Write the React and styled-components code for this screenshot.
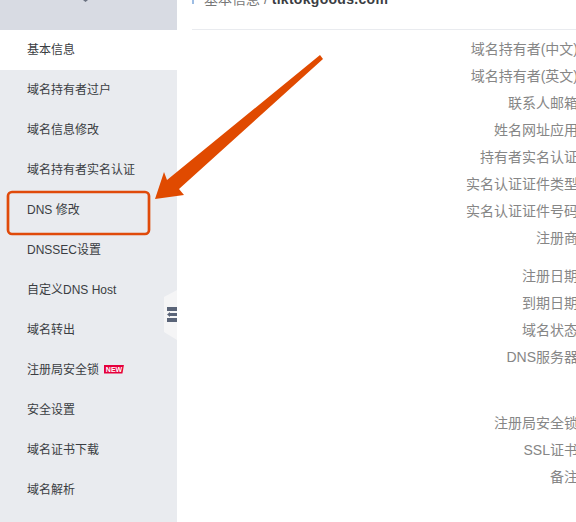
import React from "react";
import styled, { createGlobalStyle } from "styled-components";

const Global = createGlobalStyle`
  html, body { margin: 0; padding: 0; background: #fff; overflow: hidden; }
  body { width: 576px; height: 522px; font-family: "Liberation Sans", "Noto Sans CJK SC", sans-serif; }
`;
const Page = styled.div`
  position: relative; display: flex; width: 576px; height: 522px; overflow: hidden; background: #fff;
`;
const Sidebar = styled.aside`
  position: relative; flex: 0 0 177px; background: #e9ebef; display: flex; flex-direction: column;
`;
const SideTop = styled.div`
  flex: 0 0 30px; background: #d8dbe3; display: flex; justify-content: center; padding-right: 6px;
`;
const Caret = styled.span`
  width: 5px; height: 2px; background: #6b7280;
  clip-path: polygon(0 0, 100% 0, 50% 100%);
`;
const MenuItem = styled.div`
  flex: 0 0 40px; box-sizing: border-box; display: flex; align-items: center; gap: 5px; padding: 0 0 4px 27px;
  font-size: 12px; color: #3a3d42; background: ${p => (p.$active ? "#fff" : "transparent")};
`;
const NewBadge = styled.span`
  display: inline-flex; align-items: center; justify-content: center;
  width: 20px; height: 9px; margin-top: 2px; background: #e5003c; color: #fff;
  font-size: 7px; font-weight: 700; line-height: 9px;
  clip-path: polygon(0 0, 100% 0, 92% 100%, 0 100%);
`;
const Toggle = styled.div`
  position: absolute; left: 164px; top: 290px; width: 13px; height: 50px; background: #f5f5f6;
  clip-path: polygon(100% 0, 0 14%, 0 84%, 100% 100%);
  display: flex; align-items: center;
`;
const Main = styled.main`
  flex: 0 0 386px; margin-left: 15px; display: flex; flex-direction: column;
`;
const TitleBar = styled.div`
  flex: 0 0 29px; border-bottom: 1px solid #e9ebef; position: relative; overflow: hidden;
`;
const TitleMark = styled.span`
  position: absolute; left: 0; top: -6px; width: 2px; height: 10px; background: #9dbde4;
`;
const Title = styled.div`
  position: absolute; left: 12px; top: -11px; white-space: nowrap;
  font-size: 14px; line-height: 20px; color: #777;
  b { color: #3a3d42; font-weight: 700; letter-spacing: 0.3px; }
`;
const Labels = styled.div`
  display: flex; flex-direction: column; padding-top: 6px;
`;
const Group = styled.div`
  display: flex; flex-direction: column; margin-bottom: ${p => p.$after || 0}px;
`;
const Label = styled.div`
  height: 27px; line-height: 27px; text-align: right; font-size: 14px; color: #868686; white-space: nowrap;
`;
const Overlay = styled.svg`
  position: absolute; left: 0; top: 0; width: 576px; height: 522px; pointer-events: none;
`;

const items = ["基本信息","域名持有者过户","域名信息修改","域名持有者实名认证","DNS 修改","DNSSEC设置","自定义DNS Host","域名转出","注册局安全锁","安全设置","域名证书下载","域名解析"];
const groups = [
  { after: 11, rows: ["域名持有者(中文)","域名持有者(英文)","联系人邮箱","姓名网址应用","持有者实名认证","实名认证证件类型","实名认证证件号码","注册商"] },
  { after: 39, rows: ["注册日期","到期日期","域名状态","DNS服务器"] },
  { after: 0, rows: ["注册局安全锁","SSL证书","备注"] },
];

export default function App() {
  return (
    <Page>
      <Global />
      <Sidebar>
        <SideTop><Caret /></SideTop>
        {items.map((t, i) => (
          <MenuItem key={t} $active={i === 0}>
            {t}
            {t === "注册局安全锁" && <NewBadge>NEW</NewBadge>}
          </MenuItem>
        ))}
        <Toggle>
          <svg width="13" height="50" viewBox="0 0 13 50">
            <g fill="#5a6478">
              <rect x="3" y="17" width="10" height="4" />
              <rect x="6" y="23" width="7" height="3" />
              <polygon points="3,24.5 6,22 6,27" />
              <rect x="3" y="28" width="10" height="4" />
            </g>
          </svg>
        </Toggle>
      </Sidebar>
      <Main>
        <TitleBar>
          <TitleMark />
          <Title>基本信息 / <b>tiktokgoods.com</b></Title>
        </TitleBar>
        <Labels>
          {groups.map((g, i) => (
            <Group key={i} $after={g.after}>
              {g.rows.map(r => <Label key={r}>{r}</Label>)}
            </Group>
          ))}
        </Labels>
      </Main>
      <Overlay viewBox="0 0 576 522">
        <rect x="8" y="192" width="141" height="42" rx="4" fill="none" stroke="#e04a0a" strokeWidth="2.7" />
        <polygon fill="#e04a00" points="320,55 323,59 179,189 184,195 155,199 164,172 167,180" />
      </Overlay>
    </Page>
  );
}
